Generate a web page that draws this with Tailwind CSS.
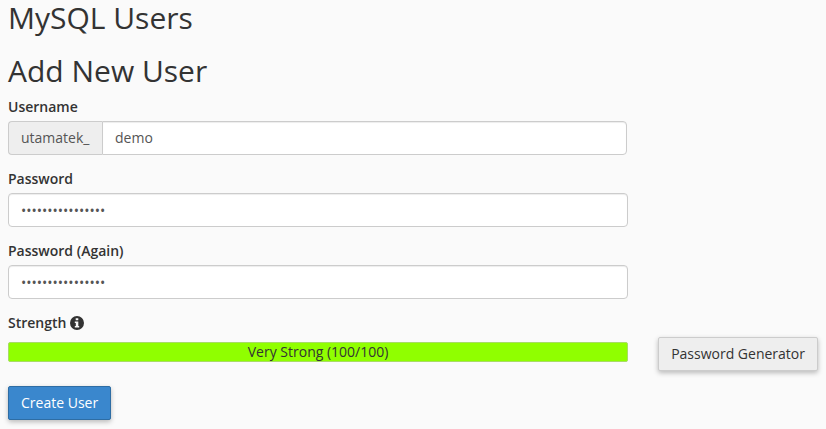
<!DOCTYPE html>
<html lang="en">
<head>
    <meta charset="UTF-8">
    <meta name="viewport" content="width=device-width, initial-scale=1.0">
    <title>MySQL Users</title>
    <script src="https://cdn.jsdelivr.net/npm/@tailwindcss/browser@4"></script>
</head>
<body class="bg-[#fafafa] px-2 font-['Open_Sans',sans-serif] text-sm leading-5 text-[#333]">
    <h1 class="text-[30px] leading-9">MySQL Users</h1>
    <h2 class="mt-[17px] mb-2 text-[30px] leading-9">Add New User</h2>

    <form class="grid grid-cols-[1fr_auto] gap-x-[30px]">
        <div class="mb-[14px]">
            <label for="username" class="mb-1 block font-semibold">Username</label>
            <div class="mr-px flex h-[34px]">
                <span class="flex w-[94px] items-center rounded-l border border-r-0 border-[#ccc] bg-[#eee] px-3 text-[#555]">utamatek_</span>
                <input id="username" type="text" value="demo" class="min-w-0 flex-1 rounded-r border border-[#ccc] bg-white px-3 text-[#555] shadow-[inset_0_1px_1px_rgba(0,0,0,0.075)]">
            </div>
        </div>

        <div class="col-start-1 mb-[14px]">
            <label for="password" class="mb-1 block font-semibold">Password</label>
            <input id="password" type="password" value="aaaaaaaaaaaaaaaa" class="block h-[34px] w-full rounded border border-[#ccc] bg-white px-3 text-[#555] shadow-[inset_0_1px_1px_rgba(0,0,0,0.075)]">
        </div>

        <div class="col-start-1 mb-[14px]">
            <label for="password2" class="mb-1 block font-semibold">Password (Again)</label>
            <input id="password2" type="password" value="aaaaaaaaaaaaaaaa" class="block h-[34px] w-full rounded border border-[#ccc] bg-white px-3 text-[#555] shadow-[inset_0_1px_1px_rgba(0,0,0,0.075)]">
        </div>

        <!-- Strength meter -->
        <div id="strength-label" class="col-start-1 mb-1 flex items-center gap-1 font-semibold">
            Strength
            <svg class="size-[14px]" viewBox="0 0 14 14" fill="currentColor" aria-hidden="true">
                <path fill-rule="evenodd" d="M7 0a7 7 0 1 1 0 14A7 7 0 0 1 7 0ZM5.7 2.2v2.1h2.6V2.2ZM4.8 5.5v1.4h1v3.2h-1v1.5h4.4v-1.5h-.9V5.5Z"/>
            </svg>
        </div>
        <div role="meter" aria-labelledby="strength-label" aria-valuenow="100" aria-valuemin="0" aria-valuemax="100" class="col-start-1 mt-[5px] flex h-5 items-center justify-center self-start rounded-xs border border-[#a8dc66] bg-[#90ff00]">
            Very Strong (100/100)
        </div>
        <button type="button" class="h-[34px] rounded-xs border border-[#ccc] bg-[#eee] px-3 shadow-[0_2px_5px_rgba(0,0,0,0.26)]">Password Generator</button>

        <div class="col-start-1 mt-[15px] pb-2">
            <button type="submit" class="h-[34px] rounded-xs border border-[#2e6da4] bg-[#3a87cd] px-3 text-white shadow-[0_2px_5px_rgba(0,0,0,0.26)]">Create User</button>
        </div>
    </form>
</body>
</html>
